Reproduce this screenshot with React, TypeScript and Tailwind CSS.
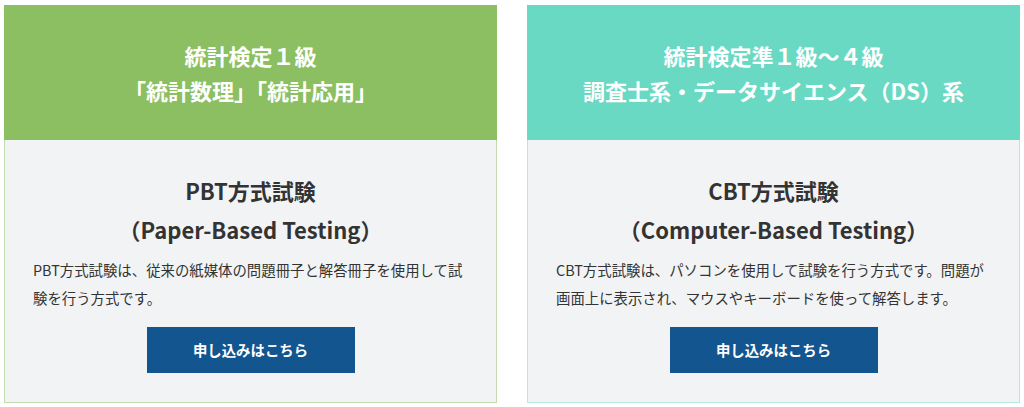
import React from 'react';

const FONT = '"Noto Sans CJK JP", "Noto Sans", sans-serif';

const CARDS = [
  {
    head: ['統計検定１級', '「統計数理」「統計応用」'],
    headBg: 'bg-[#8bbf62]',
    border: 'border-[#c3dbae]',
    title: 'PBT方式試験',
    sub: '（Paper-Based Testing）',
    desc: 'PBT方式試験は、従来の紙媒体の問題冊子と解答冊子を使用して試験を行う方式です。',
  },
  {
    head: ['統計検定準１級～４級', '調査士系・データサイエンス（DS）系'],
    headBg: 'bg-[#6ad9c3]',
    border: 'border-[#b6e8de]',
    title: 'CBT方式試験',
    sub: '（Computer-Based Testing）',
    desc: 'CBT方式試験は、パソコンを使用して試験を行う方式です。問題が画面上に表示され、マウスやキーボードを使って解答します。',
  },
];

export default function App() {
  return (
    <div className="w-full min-h-screen bg-white" style={{ fontFamily: FONT }}>
      <div className="grid grid-cols-2 gap-[30px] px-[4px] pt-[5px]">
        {CARDS.map((c) => (
          <div key={c.title} className="flex flex-col">
            {/* Header */}
            <div className={`${c.headBg} h-[135px] flex flex-col items-center justify-center text-white font-bold text-[22px] leading-[35px] text-center`}>
              <div>{c.head[0]}</div>
              <div>{c.head[1]}</div>
            </div>

            {/* Body */}
            <div className={`bg-[#f2f3f5] border-x border-b ${c.border} h-[263px] px-[28px] pt-[31px] text-[#333333]`}>
              <h3 className="text-center font-bold text-[22px] leading-[39px]">
                <div>{c.title}</div>
                <div>{c.sub}</div>
              </h3>
              <p className="mt-[7px] text-[14.4px] leading-[28px]">{c.desc}</p>
              <div className="flex justify-center mt-[15px]">
                <button className="w-[208px] h-[46px] bg-[#13558f] text-white font-bold text-[14.4px]">
                  申し込みはこちら
                </button>
              </div>
            </div>
          </div>
        ))}
      </div>
    </div>
  );
}
